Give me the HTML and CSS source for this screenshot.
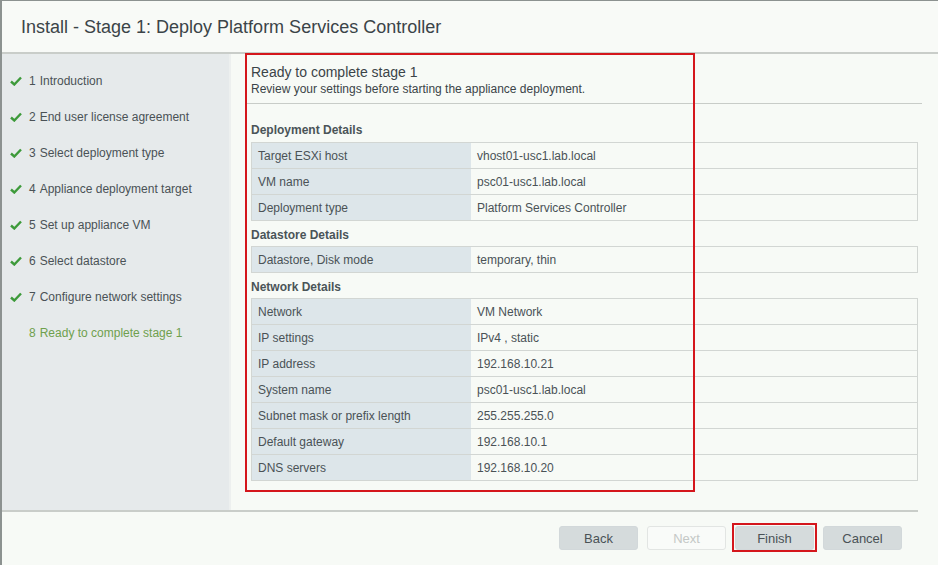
FILE: index.html
```html
<!DOCTYPE html>
<html>
<head>
<meta charset="utf-8">
<link rel="stylesheet" href="styles.css">
</head>
<body>
<div class="window">
  <header class="header">
    <h1 class="title">Install - Stage 1: Deploy Platform Services Controller</h1>
  </header>
  <div class="body">
    <nav class="sidebar">
      <ul class="steps">
        <li class="step done"><svg class="check" viewBox="0 0 12 10" width="12" height="10"><path d="M1 5.5 L4.3 8.5 L11 1.5" fill="none" stroke="#3d9a3a" stroke-width="2.4"/></svg><span class="num">1</span><span>Introduction</span></li>
        <li class="step done"><svg class="check" viewBox="0 0 12 10" width="12" height="10"><path d="M1 5.5 L4.3 8.5 L11 1.5" fill="none" stroke="#3d9a3a" stroke-width="2.4"/></svg><span class="num">2</span><span>End user license agreement</span></li>
        <li class="step done"><svg class="check" viewBox="0 0 12 10" width="12" height="10"><path d="M1 5.5 L4.3 8.5 L11 1.5" fill="none" stroke="#3d9a3a" stroke-width="2.4"/></svg><span class="num">3</span><span>Select deployment type</span></li>
        <li class="step done"><svg class="check" viewBox="0 0 12 10" width="12" height="10"><path d="M1 5.5 L4.3 8.5 L11 1.5" fill="none" stroke="#3d9a3a" stroke-width="2.4"/></svg><span class="num">4</span><span>Appliance deployment target</span></li>
        <li class="step done"><svg class="check" viewBox="0 0 12 10" width="12" height="10"><path d="M1 5.5 L4.3 8.5 L11 1.5" fill="none" stroke="#3d9a3a" stroke-width="2.4"/></svg><span class="num">5</span><span>Set up appliance VM</span></li>
        <li class="step done"><svg class="check" viewBox="0 0 12 10" width="12" height="10"><path d="M1 5.5 L4.3 8.5 L11 1.5" fill="none" stroke="#3d9a3a" stroke-width="2.4"/></svg><span class="num">6</span><span>Select datastore</span></li>
        <li class="step done"><svg class="check" viewBox="0 0 12 10" width="12" height="10"><path d="M1 5.5 L4.3 8.5 L11 1.5" fill="none" stroke="#3d9a3a" stroke-width="2.4"/></svg><span class="num">7</span><span>Configure network settings</span></li>
        <li class="step current"><span class="nocheck"></span><span class="num">8</span><span>Ready to complete stage 1</span></li>
      </ul>
    </nav>
    <main class="main">
      <div class="highlight"></div>
      <h2 class="page-title">Ready to complete stage 1</h2>
      <p class="page-sub">Review your settings before starting the appliance deployment.</p>
      <div class="divider"></div>

      <h3 class="section first">Deployment Details</h3>
      <div class="kv">
        <div class="row"><div class="k">Target ESXi host</div><div class="v">vhost01-usc1.lab.local</div></div>
        <div class="row"><div class="k">VM name</div><div class="v">psc01-usc1.lab.local</div></div>
        <div class="row"><div class="k">Deployment type</div><div class="v">Platform Services Controller</div></div>
      </div>

      <h3 class="section">Datastore Details</h3>
      <div class="kv">
        <div class="row"><div class="k">Datastore, Disk mode</div><div class="v">temporary, thin</div></div>
      </div>

      <h3 class="section">Network Details</h3>
      <div class="kv">
        <div class="row"><div class="k">Network</div><div class="v">VM Network</div></div>
        <div class="row"><div class="k">IP settings</div><div class="v">IPv4 , static</div></div>
        <div class="row"><div class="k">IP address</div><div class="v">192.168.10.21</div></div>
        <div class="row"><div class="k">System name</div><div class="v">psc01-usc1.lab.local</div></div>
        <div class="row"><div class="k">Subnet mask or prefix length</div><div class="v">255.255.255.0</div></div>
        <div class="row"><div class="k">Default gateway</div><div class="v">192.168.10.1</div></div>
        <div class="row"><div class="k">DNS servers</div><div class="v">192.168.10.20</div></div>
      </div>
    </main>
  </div>
  <footer class="footer">
    <div class="buttons">
      <button class="btn">Back</button>
      <button class="btn disabled">Next</button>
      <span class="mark"><button class="btn">Finish</button></span>
      <button class="btn">Cancel</button>
    </div>
  </footer>
</div>
</body>
</html>
```

FILE: styles.css
```css
* { box-sizing: border-box; }
html, body { margin: 0; padding: 0; }
body {
  width: 938px;
  height: 565px;
  overflow: hidden;
  background: #f7faf6;
  font-family: "Liberation Sans", Arial, sans-serif;
  color: #444c50;
}
.window {
  height: 565px;
  border-top: 1px solid #8c9290;
  border-left: 2px solid #8c9290;
  background: #f7faf6;
  display: flex;
  flex-direction: column;
}
.header {
  height: 53px;
  flex: none;
  border-bottom: 2px solid #c9cdc9;
  padding-left: 19px;
  padding-top: 1px;
  display: flex;
  align-items: center;
  background: #f8faf7;
}
.title {
  margin: 0;
  font-size: 18px;
  font-weight: normal;
  color: #3b4448;
}
.body {
  display: flex;
  height: 456px;
  flex: none;
}
.sidebar {
  width: 227px;
  background: #e6eaeb;
  border-right: 2px solid #edf0ef;
  box-sizing: content-box;
}
.steps {
  list-style: none;
  margin: 0;
  padding: 9px 0 0 0;
}
.step {
  height: 36px;
  display: flex;
  align-items: center;
  font-size: 12px;
  color: #4a5256;
  padding-left: 8px;
}
.check { margin-right: 7px; flex: none; }
.nocheck { width: 19px; flex: none; }
.num { margin-right: 4px; }
.step.current { color: #6fa04e; }
.main {
  flex: 1;
  position: relative;
  padding: 9px 20px 0 20px;
}
.highlight {
  position: absolute;
  left: 14px;
  top: -1px;
  width: 450px;
  height: 439px;
  border: 2px solid #d4161c;
  pointer-events: none;
}
.page-title {
  margin: 0;
  font-size: 14px;
  line-height: 18px;
  font-weight: normal;
  color: #3b4448;
}
.page-sub {
  margin: 0;
  font-size: 12px;
  line-height: 16px;
  color: #3b4448;
}
.divider {
  margin: 6px -4px 0 -4px;
  height: 1px;
  background: #c8ccc8;
}
.section {
  margin: 6px 0 3px 0;
  font-size: 12px;
  line-height: 16px;
  font-weight: bold;
  color: #4a5458;
}
.section.first {
  margin: 18px 0 4px 0;
}
.kv {
  border: 1px solid #d2d6d3;
  border-bottom: none;
}
.row {
  display: grid;
  grid-template-columns: 219px 1fr;
  height: 26px;
  border-bottom: 1px solid #d2d6d3;
  font-size: 12px;
}
.k {
  background: #dde6ea;
  padding-left: 6px;
  display: flex;
  align-items: center;
  color: #4a5256;
}
.v {
  background: #f7faf6;
  padding-left: 6px;
  display: flex;
  align-items: center;
  color: #4a5256;
}
.footer {
  border-top: 2px solid #c9cdc9;
  margin-right: 20px;
  padding-top: 14px;
}
.buttons {
  display: flex;
  justify-content: flex-end;
  align-items: flex-start;
  gap: 9px;
  padding-right: 16px;
}
.btn {
  display: block;
  width: 79px;
  height: 24px;
  border: 1px solid #d2d8da;
  border-radius: 3px;
  background: #d5dbdc;
  font-family: "Liberation Sans", Arial, sans-serif;
  font-size: 13px;
  color: #4a5256;
  padding: 0;
}
.btn.disabled {
  background: #f9fbf9;
  border-color: #e2e5e3;
  color: #c4c8c6;
}
.mark {
  display: block;
  border: 2px solid #d4161c;
  padding: 1px 1px 0 1px;
  margin: -3px -3px 0 -3px;
}
```
